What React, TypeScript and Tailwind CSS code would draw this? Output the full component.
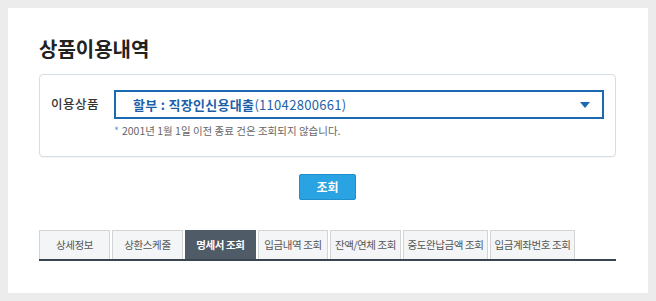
import React from 'react';

const tabs = [
  { label: '상세정보', w: 'w-[71px]' },
  { label: '상환스케줄', w: 'w-[71px]' },
  { label: '명세서 조회', w: 'w-[71px]', active: true },
  { label: '입금내역 조회', w: 'w-[70px]' },
  { label: '잔액/연체 조회', w: 'w-[71px]' },
  { label: '중도완납금액 조회', w: 'w-[85px]' },
  { label: '입금계좌번호 조회', w: 'w-[85px]' },
];

export default function App() {
  return (
    <div
      className="w-[656px] h-[301px] bg-[#ececec] p-2"
      style={{ fontFamily: '"Noto Sans CJK KR", "Noto Sans", sans-serif' }}
    >
      <div className="w-[640px] h-[285px] bg-white pl-[31px] pr-[32px] pt-[28px]">
        <h2 className="text-[20px] leading-[26px] font-bold text-[#222]">
          상품이용내역
        </h2>

        <div className="mt-[12px] border border-[#d3dee6] rounded-[4px] px-[11px] pt-[15px] pb-[18px] shadow-[0_1px_1px_rgba(0,0,0,0.04)]">
          <div className="flex items-center">
            <span className="w-[63px] text-[12.5px] font-medium text-[#333] tracking-[0.5px]">이용상품</span>
            <div className="flex-1 h-[29px] border-2 border-[#1b68b3] flex items-center justify-between pl-[17px] pr-[12px]">
              <span className="text-[13px] font-bold text-[#1d5fa8] tracking-[0.3px]">
                할부 : 직장인신용대출<span className="font-normal">(11042800661)</span>
              </span>
              <svg width="10" height="6" viewBox="0 0 10 6">
                <polygon points="0,0 10,0 5,6" fill="#1b68b3" />
              </svg>
            </div>
          </div>
          <p className="mt-[5px] ml-[63px] text-[10.5px] leading-[14px] text-[#666]">
            <span className="text-[#5aa0d0] mr-[3px]">*</span>2001년 1월 1일 이전 종료 건은 조회되지 않습니다.
          </p>
        </div>

        <div className="flex justify-center mt-[17px]">
          <button className="w-[57px] h-[26px] bg-[#29a3e2] border border-[#1f8fcb] rounded-[2px] text-white text-[12px] font-bold">
            조회
          </button>
        </div>

        <div className="mt-[30px] flex gap-[2px] border-b-2 border-[#3b4550] w-[577px]">
          {tabs.map((t) => (
            <div
              key={t.label}
              className={`${t.w} h-[29px] flex items-center justify-center text-[10.5px] tracking-[-0.4px] border border-b-0 ${
                t.active
                  ? 'bg-[#4f5b66] border-[#4f5b66] text-white font-bold'
                  : 'bg-[#f4f5f6] border-[#d2d4d6] text-[#555]'
              }`}
            >
              {t.label}
            </div>
          ))}
        </div>
      </div>
    </div>
  );
}
